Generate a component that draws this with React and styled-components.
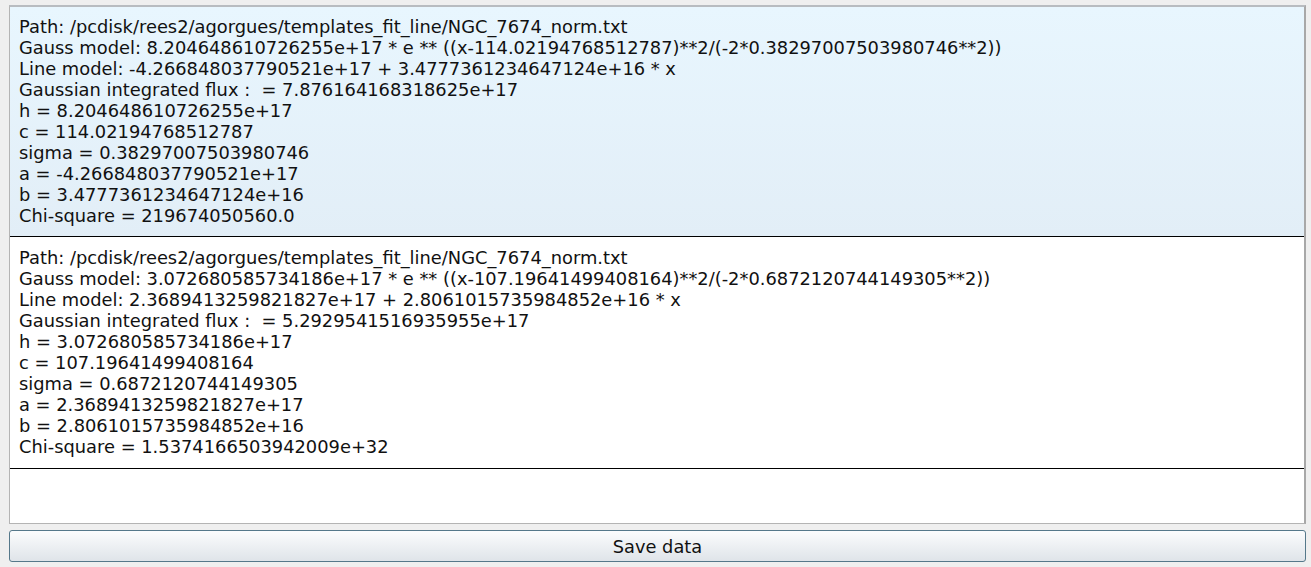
import styled, { createGlobalStyle } from "styled-components";

const Global = createGlobalStyle`
html, body {
    margin: 0;
    padding: 0;
    background: #efefef;
    font-family: "DejaVu Sans", sans-serif;
}
`

const fits = [
    [
        "Path: /pcdisk/rees2/agorgues/templates_fit_line/NGC_7674_norm.txt",
        "Gauss model: 8.204648610726255e+17 * e ** ((x-114.02194768512787)**2/(-2*0.38297007503980746**2))",
        "Line model: -4.266848037790521e+17 + 3.4777361234647124e+16 * x",
        "Gaussian integrated flux :  = 7.876164168318625e+17",
        "h = 8.204648610726255e+17",
        "c = 114.02194768512787",
        "sigma = 0.38297007503980746",
        "a = -4.266848037790521e+17",
        "b = 3.4777361234647124e+16",
        "Chi-square = 219674050560.0",
    ],
    [
        "Path: /pcdisk/rees2/agorgues/templates_fit_line/NGC_7674_norm.txt",
        "Gauss model: 3.072680585734186e+17 * e ** ((x-107.19641499408164)**2/(-2*0.6872120744149305**2))",
        "Line model: 2.3689413259821827e+17 + 2.8061015735984852e+16 * x",
        "Gaussian integrated flux :  = 5.2929541516935955e+17",
        "h = 3.072680585734186e+17",
        "c = 107.19641499408164",
        "sigma = 0.6872120744149305",
        "a = 2.3689413259821827e+17",
        "b = 2.8061015735984852e+16",
        "Chi-square = 1.5374166503942009e+32",
    ],
]

const App = () => {
    return (
        <Window>
            <Global />
            <List>
                {fits.map((lines, i) => (
                    <Item key={i} selected={i === 0}>
                        {lines.map((l, j) => <Line key={j}>{l}</Line>)}
                    </Item>
                ))}
            </List>
            <Button>Save data</Button>
        </Window>
    )
};

const Window = styled.div`
display: flex;
flex-direction: column;
row-gap: 6px;
height: 567px;
box-sizing: border-box;
padding: 5px 5px 5px 9px;
`

const List = styled.div`
height: 519px;
box-sizing: border-box;
background-color: white;
border: 1px solid #b4b4b4;
border-top: 2px solid #b8bcc0;
border-right: 2px solid #a8a8a8;
overflow: hidden;
`

const Item = styled.div`
padding: ${p => p.selected ? "9px 9px 10px" : "10px 9px 11px"};
border-bottom: 1px solid black;
background: ${p => p.selected ? "linear-gradient(#e8f6fe, #e2eef7)" : "white"};
`

const Line = styled.div`
height: 21px;
line-height: 21px;
font-size: 17.85px;
color: #111;
white-space: pre;
`

const Button = styled.button`
height: 32px;
border: 1px solid #55788a;
border-radius: 3px;
background: linear-gradient(#fbfcfd, #dfe4e9);
font-family: "DejaVu Sans", sans-serif;
font-size: 17.8px;
color: #111;
padding: 0;
`

export default App;
